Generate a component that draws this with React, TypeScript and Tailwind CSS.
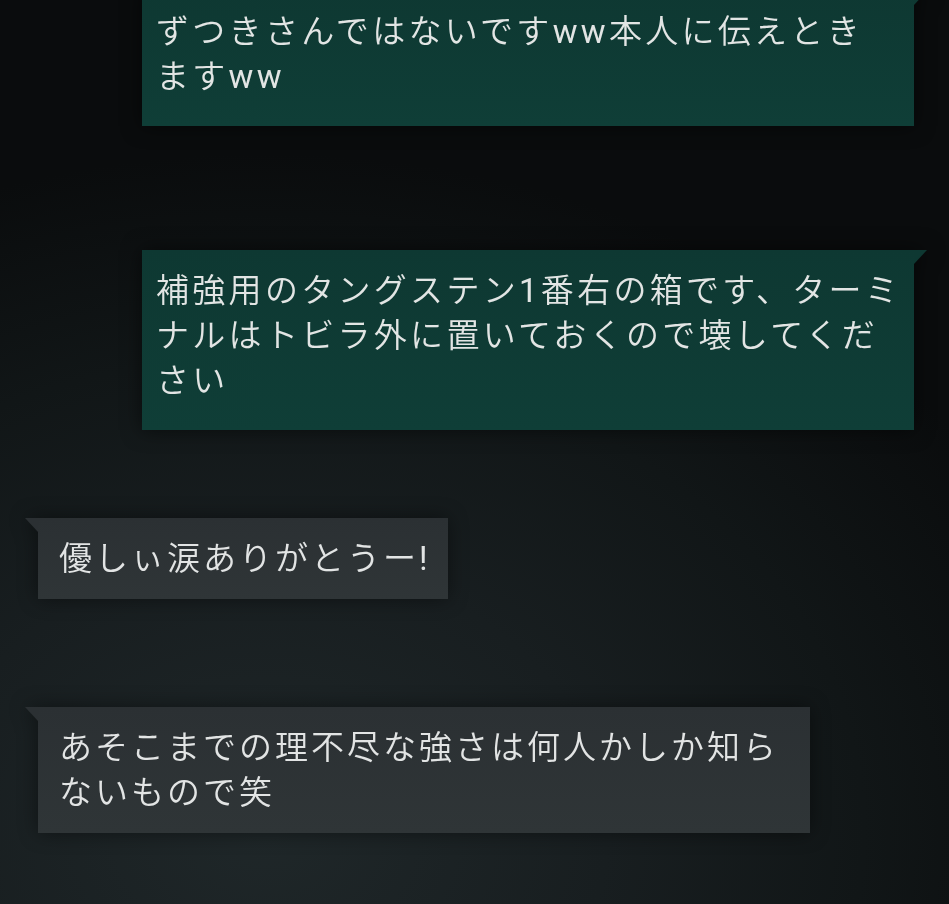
import React from "react";

const font = { fontFamily: 'Roboto, "Noto Sans CJK JP", "Noto Sans", sans-serif' };

function L({ children }: { children: React.ReactNode }) {
  return <span className="font-normal">{children}</span>;
}

function Green({ lines, first }: { lines: React.ReactNode[]; first?: boolean }) {
  return (
    <div
      className={`self-end mr-[35px] w-[772px] drop-shadow-[0_0_10px_rgba(0,0,0,0.55)] ${first ? "-mt-[9px]" : "mt-[124px]"}`}
    >
      <div className="relative bg-gradient-to-b from-[#0e3832] to-[#0f3e37] pl-[14px] pt-[18px] pb-[27px] text-[#e2e5e4] text-[33px] font-[350] leading-[45px] tracking-[3.3px] whitespace-nowrap">
        {lines.map((l, i) => (
          <div key={i}>{l}</div>
        ))}
        <div className="absolute top-0 right-[-13px] w-[13px] h-[14px] bg-[#0e3832] [clip-path:polygon(0_0,100%_0,0_100%)]" />
      </div>
    </div>
  );
}

function Gray({ lines, className, inner }: { lines: React.ReactNode[]; className: string; inner: string }) {
  return (
    <div className={`self-start ml-[38px] drop-shadow-[0_0_10px_rgba(0,0,0,0.45)] ${className}`}>
      <div className={`relative bg-gradient-to-b from-[#2b3033] to-[#2f3537] pl-[21px] pt-[18px] pb-[18px] text-[#e2e4e4] text-[33px] font-[350] leading-[45px] tracking-[3px] whitespace-nowrap ${inner}`}>
        {lines.map((l, i) => (
          <div key={i}>{l}</div>
        ))}
        <div className="absolute top-0 left-[-13px] w-[13px] h-[14px] bg-[#2b3033] [clip-path:polygon(0_0,100%_0,100%_100%)]" />
      </div>
    </div>
  );
}

export default function App() {
  return (
    <div
      style={font}
      className="w-[949px] h-[904px] overflow-hidden flex flex-col bg-[radial-gradient(ellipse_90%_75%_at_28%_92%,#1f2729_0%,#181e20_40%,#111617_70%,#0a0c0d_100%)]"
    >
      <Green
        first
        lines={[
          <>ずつきさんではないです<L>ww</L>本人に伝えとき</>,
          <>ます<L>ww</L></>,
        ]}
      />
      <Green
        lines={[
          <>補強用のタングステン<L>1</L>番右の箱です、ターミ</>,
          "ナルはトビラ外に置いておくので壊してくだ",
          "さい",
        ]}
      />
      <Gray className="mt-[88px]" inner="pr-[17px]" lines={[<>優しぃ涙ありがとうー<L>!</L></>]} />
      <Gray className="mt-[108px] w-[772px]" inner="" lines={["あそこまでの理不尽な強さは何人かしか知ら", "ないもので笑"]} />
    </div>
  );
}
